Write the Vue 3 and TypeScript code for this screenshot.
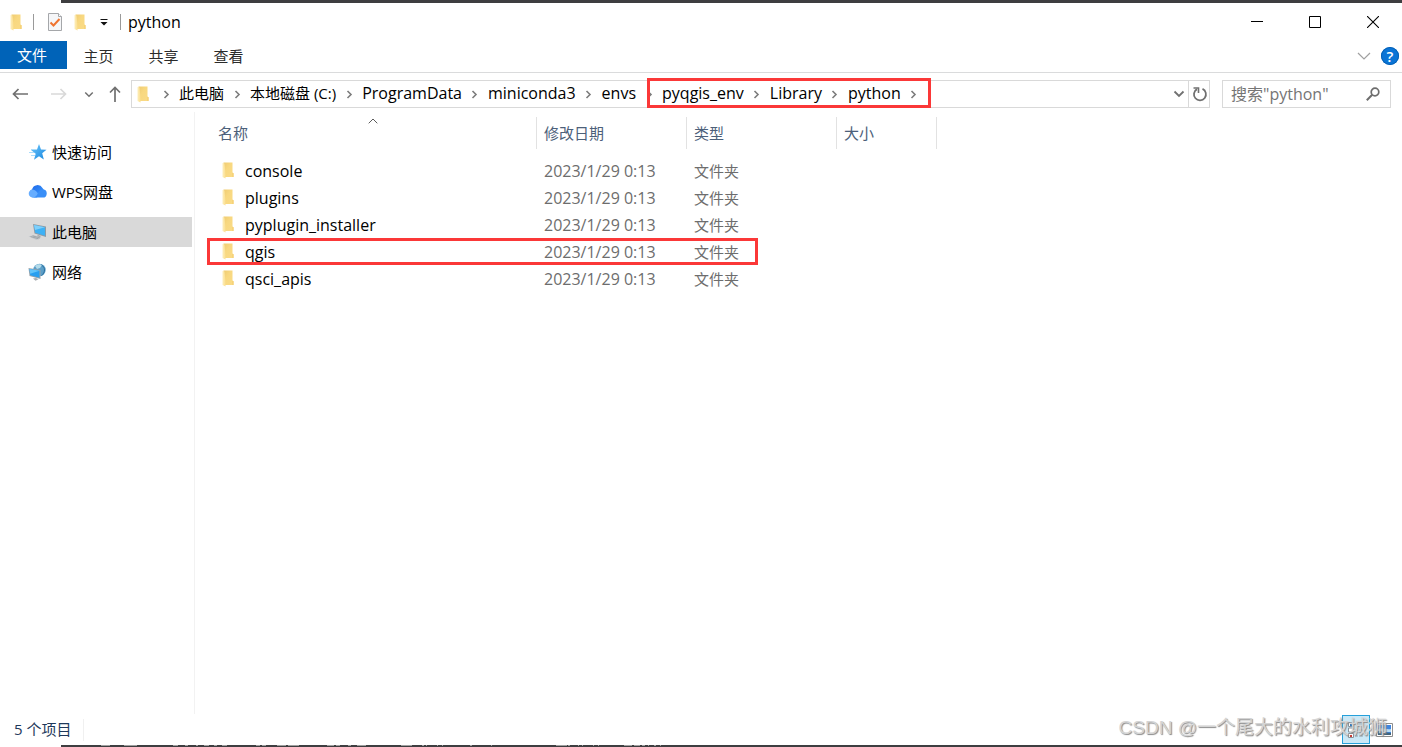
<script setup lang="ts">
import { ref } from 'vue'

interface Entry {
  name: string
  modified: string
  kind: string
}

const tabs: string[] = ['主页', '共享', '查看']
const roots: string[] = ['此电脑', '本地磁盘 (C:)']
const parents: string[] = ['ProgramData', 'miniconda3', 'envs']
const marked: string[] = ['pyqgis_env', 'Library', 'python']
const places = [
  { id: 'quick', label: '快速访问' },
  { id: 'cloud', label: 'WPS网盘' },
  { id: 'pc', label: '此电脑' },
  { id: 'net', label: '网络' },
]
const activePlace = ref('pc')
const query = ref('')
const entries: Entry[] = ['console', 'plugins', 'pyplugin_installer', 'qgis', 'qsci_apis'].map((name) => ({
  name,
  modified: '2023/1/29 0:13',
  kind: '文件夹',
}))
const taskMarks: number[][] = [
  [40, 9], [63, 12], [72, 4], [112, 5], [124, 3], [135, 2], [143, 5], [153, 3], [161, 5], [195, 4],
  [201, 4], [216, 9], [227, 11], [266, 7], [275, 4], [287, 3], [296, 9], [340, 11], [361, 2], [365, 1],
  [376, 1], [381, 1], [409, 2], [430, 1], [495, 11], [507, 2], [517, 1], [521, 1], [532, 1], [537, 1],
  [563, 8], [573, 6], [581, 3], [587, 1], [593, 2], [599, 1],
]
</script>

<template>
  <div class="window">
    <svg width="0" height="0" class="defs" aria-hidden="true">
      <defs>
        <linearGradient id="fold-front" x1="0" y1="0" x2="1" y2="0">
          <stop offset="0" stop-color="#fdeebb" />
          <stop offset="1" stop-color="#fbdf90" />
        </linearGradient>
        <linearGradient id="fold-body" x1="0" y1="0" x2="1" y2="1">
          <stop offset="0" stop-color="#efcb72" />
          <stop offset=".4" stop-color="#f8d880" />
          <stop offset="1" stop-color="#fadb87" />
        </linearGradient>
        <linearGradient id="star-fill" x1="0" y1="0" x2="1" y2="1">
          <stop offset="0" stop-color="#6cc6fb" />
          <stop offset="1" stop-color="#1887e0" />
        </linearGradient>
        <linearGradient id="cloud-fill" x1="0" y1="0" x2="1" y2="1">
          <stop offset="0" stop-color="#1c64e8" />
          <stop offset="1" stop-color="#3fa0ff" />
        </linearGradient>
        <symbol id="folder" viewBox="0 0 12 17">
          <path d="M1.500.500h9v10l1 1V15H2z" fill="url(#fold-body)" />
          <path d="M10.500 10.500l1 1V15h-1z" fill="#f3cc6c" />
          <path d="M.5 1 2.500 1.500 3.500 12v4.500L.5 15z" fill="url(#fold-front)" />
        </symbol>
        <symbol id="chev" viewBox="0 0 7 9">
          <path d="M1.500 1 5 4.500 1.500 8" fill="none" stroke="#7c7c7c" stroke-width="1.600" />
        </symbol>
        <symbol id="chev-down" viewBox="0 0 12 8">
          <path d="M1.500 1.500 6 6l4.500-4.500" fill="none" stroke="currentColor" stroke-width="1.800" />
        </symbol>
      </defs>
    </svg>

    <div class="strip top-strip"></div>

    <header class="titlebar">
      <svg class="folder title-folder" aria-hidden="true"><use href="#folder" /></svg>
      <span class="rule"></span>
      <button class="plain check" aria-label="属性">
        <svg width="14" height="18" viewBox="0 0 14 18">
          <path d="M.5.500h10l3 3v14H.5z" fill="#f5f6f8" stroke="#a5a7aa" />
          <path d="M10.500.500v3h3" fill="#fff" stroke="#a5a7aa" />
          <path d="M2.500 9.500 5.500 12.500 11.500 6" fill="none" stroke="#ef7430" stroke-width="2" />
        </svg>
      </button>
      <button class="plain new-folder" aria-label="新建文件夹">
        <svg class="folder"><use href="#folder" /></svg>
      </button>
      <button class="plain customize" aria-label="自定义快速访问工具栏">
        <svg width="8" height="7" viewBox="0 0 8 7">
          <path d="M.5 0h7v1h-7zM.5 3h7L4 6.500z" fill="#111" />
        </svg>
      </button>
      <span class="rule"></span>
      <h1>python</h1>
      <div class="window-buttons">
        <button class="plain" aria-label="最小化">
          <svg width="12" height="12" viewBox="0 0 12 12"><path d="M0 5.500h12" stroke="#000" /></svg>
        </button>
        <button class="plain" aria-label="最大化">
          <svg width="12" height="12" viewBox="0 0 12 12"><path d="M.5.500h11v11H.5z" fill="none" stroke="#000" /></svg>
        </button>
        <button class="plain" aria-label="关闭">
          <svg width="12" height="12" viewBox="0 0 12 12"><path d="m0 0 12 12M12 0 0 12" stroke="#000" stroke-width="1.100" /></svg>
        </button>
      </div>
    </header>

    <nav class="ribbon">
      <button class="plain file-tab">文件</button>
      <button v-for="tab in tabs" :key="tab" class="plain tab">{{ tab }}</button>
      <button class="plain expand" aria-label="展开功能区">
        <svg width="14" height="8" viewBox="0 0 14 8"><path d="m1 1 6 6 6-6" fill="none" stroke="#a0a0a0" stroke-width="1.200" /></svg>
      </button>
      <button class="plain help" aria-label="帮助">?</button>
    </nav>

    <div class="address-row">
      <div class="history">
        <button class="plain back" aria-label="后退">
          <svg width="16" height="12" viewBox="0 0 16 12"><path d="M16 6H1.500M6.500 1l-5 5 5 5" fill="none" stroke="#707070" stroke-width="1.700" /></svg>
        </button>
        <button class="plain forward" aria-label="前进">
          <svg width="16" height="12" viewBox="0 0 16 12"><path d="M0 6h14.500M9.500 1l5 5-5 5" fill="none" stroke="#d9d9d9" stroke-width="1.700" /></svg>
        </button>
        <button class="plain recent" aria-label="最近浏览的位置">
          <svg width="10" height="7"><use href="#chev-down" /></svg>
        </button>
        <button class="plain up" aria-label="上移">
          <svg width="12" height="16" viewBox="0 0 12 16"><path d="M6 16V1.500M1 6.500l5-5 5 5" fill="none" stroke="#707070" stroke-width="1.700" /></svg>
        </button>
      </div>
      <div class="address">
        <svg class="folder" aria-hidden="true"><use href="#folder" /></svg>
        <span class="sep first"><svg width="7" height="9"><use href="#chev" /></svg></span>
        <template v-for="crumb in roots" :key="crumb">
          <button class="plain crumb">{{ crumb }}</button>
          <span class="sep"><svg width="7" height="9"><use href="#chev" /></svg></span>
        </template>
        <template v-for="crumb in parents" :key="crumb">
          <button class="plain crumb latin">{{ crumb }}</button>
          <span class="sep"><svg width="7" height="9"><use href="#chev" /></svg></span>
        </template>
        <span class="marked">
          <template v-for="crumb in marked" :key="crumb">
            <button class="plain crumb latin">{{ crumb }}</button>
            <span class="sep"><svg width="7" height="9"><use href="#chev" /></svg></span>
          </template>
        </span>
        <button class="plain drop" aria-label="以前的位置">
          <svg width="12" height="8"><use href="#chev-down" /></svg>
        </button>
        <button class="plain refresh" aria-label="刷新">
          <svg width="16" height="16" viewBox="0 0 16 16">
            <path d="M10.500 2.900a6 6 0 1 1-5.500.200" fill="none" stroke="#707070" stroke-width="1.800" />
            <path d="M1.500 2h5v5" fill="none" stroke="#707070" stroke-width="1.600" />
          </svg>
        </button>
      </div>
      <label class="search">
        <input v-model="query" type="text" placeholder='搜索"python"' aria-label="搜索python" />
        <svg width="14" height="14" viewBox="0 0 14 14" aria-hidden="true">
          <circle cx="9" cy="5" r="3.800" fill="none" stroke="#6d6d6d" stroke-width="1.700" />
          <path d="M6.200 7.800.800 13.200" stroke="#6d6d6d" stroke-width="2" />
        </svg>
      </label>
    </div>

    <div class="body">
      <aside>
        <button
          v-for="place in places"
          :key="place.id"
          class="plain place"
          :class="{ active: place.id === activePlace }"
          @click="activePlace = place.id"
        >
          <svg v-if="place.id === 'quick'" width="19" height="18" viewBox="0 0 19 18">
            <path d="m11 1 2 5.500 5.500.200-4.300 3.600 1.600 6.200-4.800-3.300-5 3.500 1.700-6L3 7l6-.500z" fill="url(#star-fill)" />
            <path d="M3 6.500h5M1 9.500h5M3 12.500h4" stroke="#a9dcfb" stroke-width="1" />
          </svg>
          <svg v-else-if="place.id === 'cloud'" width="19" height="18" viewBox="0 0 19 18">
            <path d="M5 14.500a4.200 4.200 0 0 1-1-8A5.700 5.700 0 0 1 14.500 5L16 7l-7 7.500z" fill="url(#cloud-fill)" />
            <path d="M5.500 14.500h8.800a4 4 0 0 0 .8-8c-2.600-.3-4 1.500-5.300 3.700-1 2-2.300 3.600-4.300 4.300z" fill="#3a8ff7" />
            <path d="M.700 11a4 4 0 0 1 4.800-4.300c2 .4 3 1.700 4.300 3.500-1 2.300-2.300 4.300-5 4.300-2 0-3.700-1.300-4.100-3.500z" fill="#66adff" />
          </svg>
          <svg v-else-if="place.id === 'pc'" width="19" height="18" viewBox="0 0 19 18">
            <path d="m5 1 13 2.500v10.500L6.500 10.500z" fill="#8c9aa5" />
            <path d="m6 2 11 2.300v8.400L7.200 9.700z" fill="#3eb1f5" />
            <path d="m6 2 11 2.300L7 7z" fill="#7fd0fb" />
            <path d="m10 12 3 1-2 2-3-1z" fill="#a3a7aa" />
            <path d="m.500 13.500 5-1.500 8 2.500-5 2.500z" fill="#c3c8cc" />
            <path d="m2.500 13.500 8 2.300M4.500 12.800l7.500 2.200" stroke="#8f969b" stroke-width=".7" />
          </svg>
          <svg v-else width="19" height="18" viewBox="0 0 19 18">
            <circle cx="11.500" cy="7" r="6.200" fill="#5c9fc8" />
            <path d="M7 3c2-2 5-2.500 7-1l-2 3-3 1z" fill="#b4dbea" />
            <path d="M13.500 1.800c4 3 4 7 0 11" fill="none" stroke="#2a6e9e" />
            <path d="M.500 5 12.500 7v9L1.500 13z" fill="#9aa4ab" />
            <path d="m1.500 6 10 1.800v7L2.200 12.200z" fill="#289ff0" />
            <path d="m1.500 6 10 1.800-9.300 3z" fill="#62c4fa" />
            <path d="m5 15.500 3-.500 2.500 1.300-3 1.500z" fill="#a8adb1" />
          </svg>
          <span>{{ place.label }}</span>
        </button>
      </aside>

      <main>
        <table>
          <colgroup>
            <col class="c-name" /><col class="c-date" /><col class="c-kind" /><col class="c-size" />
          </colgroup>
          <thead>
            <tr>
              <th class="name-head" scope="col">
                名称
                <svg class="sort" width="10" height="6" viewBox="0 0 10 6" aria-hidden="true"><path d="m.700 5.300 4.300-4.300 4.300 4.300" fill="none" stroke="#5a5a5a" /></svg>
              </th>
              <th scope="col">修改日期</th>
              <th scope="col">类型</th>
              <th scope="col">大小</th>
            </tr>
          </thead>
          <tbody>
            <tr v-for="entry in entries" :key="entry.name" :class="{ boxed: entry.name === 'qgis' }">
              <td class="name latin">
                <span class="name-line">
                  <svg class="folder" aria-hidden="true"><use href="#folder" /></svg>
                  <span class="label">{{ entry.name }}</span>
                </span>
              </td>
              <td class="latin">{{ entry.modified }}</td>
              <td>{{ entry.kind }}</td>
              <td></td>
            </tr>
          </tbody>
        </table>
      </main>
    </div>

    <footer>
      <span class="count">5 个项目</span>
      <div class="views">
        <button class="plain details" aria-label="详细信息">
          <svg width="16" height="16" viewBox="0 0 16 16">
            <path d="M.5.500h5v4h-5zM.5 6h5v4h-5zM.5 11.500h5v4h-5z" fill="#fff" stroke="#8a9299" />
            <path d="M7 2h3M11 2h4M7 8h3M11 8h4M7 14h3M11 14h4" stroke="#9aa7b0" />
            <path d="M2 2h2v2H2z" fill="#2f7ac2" /><path d="M2 13h2v2H2z" fill="#c83a32" />
          </svg>
        </button>
        <button class="plain thumbs" aria-label="大缩略图">
          <svg width="17" height="14" viewBox="0 0 17 14">
            <path d="M.5.500h16v13H.5z" fill="#fff" stroke="#8d8d8d" />
            <path d="M2 2h13v10H2z" fill="#3f86e0" />
            <path d="M2 6c4-2 8 1 13 0v3H2z" fill="#b8dcf4" />
            <path d="M2 8c3 0 4 1 13 2v2H2z" fill="#41647c" />
          </svg>
        </button>
      </div>
      <div class="watermark">CSDN @一个尾大的水利攻城狮</div>
    </footer>
    <div class="strip">
      <svg width="620" height="2" aria-hidden="true">
        <rect v-for="m in taskMarks" :key="m[0]" :x="m[0]" y="0" :width="m[1]" height="1" fill="#a0a0a0" />
      </svg>
    </div>
  </div>
</template>

<style>
body {
  margin: 0;
  background: #fff;
}
</style>

<style scoped>
.window {
  min-height: 100vh;
  display: flex;
  flex-direction: column;
  background: #fff;
  color: #000;
  font: 15px/20px "Open Sans", "Noto Sans CJK SC", sans-serif;
  overflow: hidden;
  position: relative;
}
.defs {
  position: absolute;
}
.plain {
  border: 0;
  padding: 0;
  margin: 0;
  background: none;
  font: inherit;
  color: inherit;
  display: flex;
  align-items: center;
  justify-content: center;
  flex: none;
}
svg {
  display: block;
  flex: none;
}
.folder {
  width: 12px;
  height: 17px;
}
.strip {
  height: 2px;
  margin-left: 61px;
  background: #3e3e40;
}
.top-strip {
  height: 3px;
}
.titlebar {
  height: 38px;
  display: flex;
  align-items: center;
  padding-left: 10px;
}
.rule {
  width: 1px;
  height: 16px;
  background: #9a9a9a;
  margin-left: 11px;
}
.check {
  margin-left: 14px;
}
.new-folder {
  margin-left: 12px;
}
.customize {
  margin-left: 14px;
}
.customize + .rule {
  margin-left: 12px;
}
h1 {
  margin: 0 0 0 7px;
  font-size: 16px;
  font-weight: 400;
}
.window-buttons {
  margin-left: auto;
  display: flex;
}
.window-buttons .plain {
  width: 58px;
  height: 38px;
}
.ribbon {
  height: 31px;
  display: flex;
  align-items: flex-start;
  border-bottom: 1px solid #dadbdc;
  color: #2b2b2b;
}
.file-tab {
  width: 67px;
  height: 28px;
  padding-right: 3px;
  background: #0063b8;
  color: #fff;
}
.tab {
  width: 65px;
  height: 30px;
  padding-right: 2px;
}
.expand {
  margin: 11px 10px 0 auto;
}
.help {
  width: 18px;
  height: 18px;
  margin: 6px 3px 0 0;
  border-radius: 50%;
  background: #0a74d6;
  box-shadow: inset 0 0 0 1px #0560b4;
  color: #fff;
  font-size: 15px;
  font-weight: 600;
}
.address-row {
  display: flex;
  align-items: center;
  padding: 7px 11px 4px 12px;
}
.history {
  width: 119px;
  display: flex;
  align-items: center;
  color: #707070;
}
.forward {
  margin-left: 23px;
}
.recent {
  margin-left: 17px;
}
.up {
  margin-left: 15px;
}
.address {
  flex: 1;
  height: 26px;
  display: flex;
  align-items: center;
  border: 1px solid #d9d9d9;
  padding-left: 5px;
}
.crumb {
  height: 26px;
  padding-bottom: 2px;
  white-space: pre;
}
.latin {
  font-size: 16px;
}
.sep {
  width: 26px;
  display: flex;
  justify-content: center;
}
.sep.first {
  margin-left: 4px;
}
.marked {
  display: flex;
  align-items: center;
  position: relative;
}
.marked::after {
  content: "";
  position: absolute;
  inset: -3px -4px -1px -15px;
  border: 3px solid #fb3838;
  pointer-events: none;
}
.drop {
  margin-left: auto;
  width: 19px;
  height: 26px;
  color: #707070;
}
.refresh {
  width: 21px;
  height: 26px;
  padding-left: 1px;
  border-left: 1px solid #d9d9d9;
}
.search {
  width: 167px;
  height: 26px;
  margin-left: 12px;
  border: 1px solid #d9d9d9;
  display: flex;
  align-items: center;
}
.search input {
  flex: 1;
  min-width: 0;
  border: 0;
  outline: 0;
  padding: 0 0 0 8px;
  background: none;
  font: inherit;
  font-size: 16px;
}
.search input::placeholder {
  color: #757575;
  opacity: 1;
}
.search svg {
  margin-right: 10px;
}
.body {
  flex: 1;
  display: flex;
}
aside {
  width: 194px;
  border-right: 1px solid #f2f2f2;
  padding-top: 25px;
  display: flex;
  flex-direction: column;
  gap: 10px;
}
.place {
  width: 192px;
  height: 30px;
  padding-left: 28px;
  justify-content: flex-start;
  gap: 5px;
}
.active {
  background: #d9d9d9;
}
main {
  flex: 1;
  padding-top: 5px;
}
table {
  border-collapse: separate;
  border-spacing: 0;
  table-layout: fixed;
  width: 742px;
}
.c-name {
  width: 342px;
}
.c-date,
.c-kind {
  width: 150px;
}
.c-size {
  width: 100px;
}
th {
  height: 32px;
  padding: 0 0 0 7px;
  border-right: 1px solid #e2e2e2;
  text-align: left;
  font-weight: 400;
  color: #4c607a;
  position: relative;
}
.name-head {
  padding-left: 23px;
}
.sort {
  position: absolute;
  top: 1px;
  left: 173px;
}
tbody::before {
  content: "";
  display: table-row;
  height: 9px;
}
td {
  height: 25px;
  padding: 0 0 2px 7px;
  color: #6d6d6d;
}
.name {
  padding-left: 27px;
  color: #000;
}
.name-line {
  display: flex;
  align-items: center;
  gap: 11px;
}
.boxed {
  position: relative;
}
.boxed::after {
  content: "";
  position: absolute;
  inset: -1px 179px 1px 12px;
  border: 3px solid #fb3838;
  pointer-events: none;
}
footer {
  height: 31px;
  display: flex;
  align-items: center;
  justify-content: space-between;
  position: relative;
  color: #1e395b;
}
.count {
  margin-left: 14px;
  padding: 0 12px 2px 0;
  border-right: 1px solid #f0f0f0;
}
.views {
  display: flex;
  align-items: center;
  gap: 6px;
  margin-right: 9px;
}
.details {
  width: 28px;
  height: 29px;
  box-sizing: border-box;
  border: 1px solid #26a0da;
  background: #cbe8f6;
}
.watermark {
  position: absolute;
  right: 15px;
  top: 2px;
  font: 19px/24px "Liberation Sans", "Noto Sans CJK SC", sans-serif;
  color: #d4d4d4;
  text-shadow: 1px 1px 1px #888;
  white-space: nowrap;
  pointer-events: none;
}
</style>
